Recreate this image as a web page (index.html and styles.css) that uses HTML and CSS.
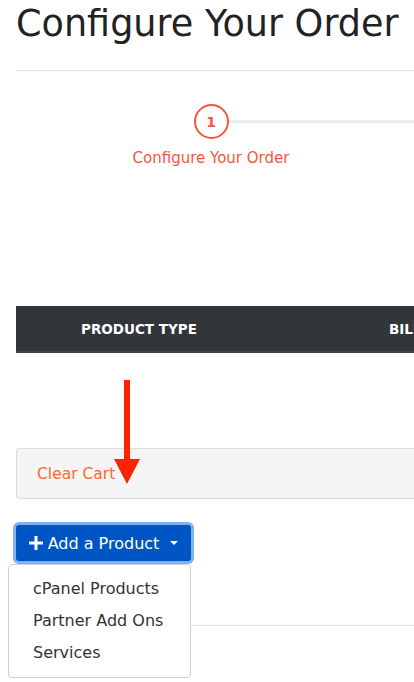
FILE: index.html
```html
<!DOCTYPE html>
<html lang="en">
<head>
    <meta charset="UTF-8">
    <meta name="viewport" content="width=device-width, initial-scale=1.0">
    <title>Configure Your Order</title>
    <link rel="stylesheet" href="styles.css">
</head>
<body>

    <div class="page">
        <h1 class="page-title">Configure Your Order</h1>
        <div class="divider"></div>

        <div class="steps">
            <div class="step">
                <div class="step-track">
                    <span class="track-blank"></span>
                    <span class="step-num">1</span>
                    <span class="track-line"></span>
                </div>
                <div class="step-label">Configure Your Order</div>
            </div>
        </div>

        <div class="cart-head">
            <div class="col-type">PRODUCT TYPE</div>
            <div class="col-billing">BILLING CYCLE</div>
        </div>

        <div class="cart-area">
            <div class="cart-empty"></div>
            <div class="cart-actions">
                <a href="#" class="clear-link">Clear Cart</a>
            </div>

            <!-- flecha roja de anotacion -->
            <svg class="arrow" width="30" height="106" viewBox="0 0 30 106">
                <rect x="12" y="0" width="6" height="84" fill="#ff2200"/>
                <polygon points="2,79 28,79 15,104" fill="#ff2200"/>
            </svg>
        </div>

        <div class="add-wrap">
            <button type="button" class="add-btn">
                <svg class="plus" width="14" height="14" viewBox="0 0 14 14">
                    <rect x="5.5" y="0" width="3" height="14" fill="#fff"/>
                    <rect x="0" y="5.5" width="14" height="3" fill="#fff"/>
                </svg>
                Add a Product
                <span class="caret"></span>
            </button>
            <ul class="add-menu">
                <li>cPanel Products</li>
                <li>Partner Add Ons</li>
                <li>Services</li>
            </ul>
        </div>

        <div class="bottom-line"></div>
    </div>

</body>
</html>
```

FILE: styles.css
```css
html {
    overflow: hidden;
}

body {
    margin: 0;
    font-family: "DejaVu Sans", Arial, sans-serif;
    color: #222;
    background: #fff;
}

.page {
    width: 800px;
    padding-left: 16px;
    padding-bottom: 80px;
}

.page-title {
    font-size: 36.6px;
    font-weight: normal;
    line-height: 44px;
    margin: 2px 0 0 0;
    color: #222;
}

.divider {
    border-top: 1px solid #e0e0e0;
    margin-top: 24px;
}

.steps {
    margin-top: 33px;
    display: flex;
}

.step {
    width: 390px;
    display: flex;
    flex-direction: column;
    align-items: center;
}

.step-track {
    width: 100%;
    display: flex;
    align-items: center;
}

.track-blank {
    flex: 1;
}

.step-num {
    width: 31px;
    height: 31px;
    border: 2px solid #f4573b;
    border-radius: 50%;
    color: #f4573b;
    font-weight: bold;
    font-size: 14px;
    display: flex;
    align-items: center;
    justify-content: center;
}

.track-line {
    flex: 1;
    height: 3px;
    background: #ebebeb;
    /* la linea sigue hacia el siguiente paso */
    box-shadow: 150px 0 0 #ebebeb;
}

.step-label {
    margin-top: 10px;
    color: #f4573b;
    font-size: 15px;
}

.cart-head {
    margin-top: 139px;
    height: 45px;
    background: #31363b;
    border-bottom: 2px solid #3e454b;
    display: flex;
    align-items: center;
    color: #fff;
    font-weight: bold;
    font-size: 13.5px;
}

.col-type {
    width: 373px;
    padding-left: 65px;
    box-sizing: border-box;
}

.col-billing {
    width: 200px;
}

.cart-area {
    position: relative;
}

.cart-empty {
    height: 95px;
}

.cart-actions {
    height: 49px;
    background: #f5f5f5;
    border: 1px solid #dcdcdc;
    border-radius: 3px;
    display: flex;
    align-items: center;
    padding-left: 20px;
}

.clear-link {
    color: #fb6a2c;
    text-decoration: none;
    font-size: 15.5px;
}

.arrow {
    position: absolute;
    left: 96px;
    top: 27px;
}

.add-wrap {
    position: relative;
    margin-top: 26px;
}

.add-btn {
    height: 36px;
    width: 175px;
    background: #0055c4;
    color: #fff;
    border: none;
    border-radius: 3px;
    box-shadow: 0 0 0 3px #80b2f0;
    font-family: inherit;
    font-size: 16px;
    display: flex;
    align-items: center;
    justify-content: center;
    gap: 5px;
    padding: 0;
}

.caret {
    width: 0;
    height: 0;
    border-left: 4px solid transparent;
    border-right: 4px solid transparent;
    border-top: 4px solid #fff;
    margin-left: 6px;
}

.add-menu {
    position: absolute;
    left: -8px;
    top: 39px;
    width: 183px;
    box-sizing: border-box;
    margin: 0;
    padding: 8px 0;
    list-style: none;
    background: #fff;
    border: 1px solid #cfcfcf;
    border-radius: 4px;
    z-index: 2;
}

.add-menu li {
    padding: 0 0 0 24px;
    line-height: 32px;
    font-size: 16px;
    color: #333;
}

.bottom-line {
    margin-top: 64px;
    border-top: 1px solid #e0e0e0;
}
```
